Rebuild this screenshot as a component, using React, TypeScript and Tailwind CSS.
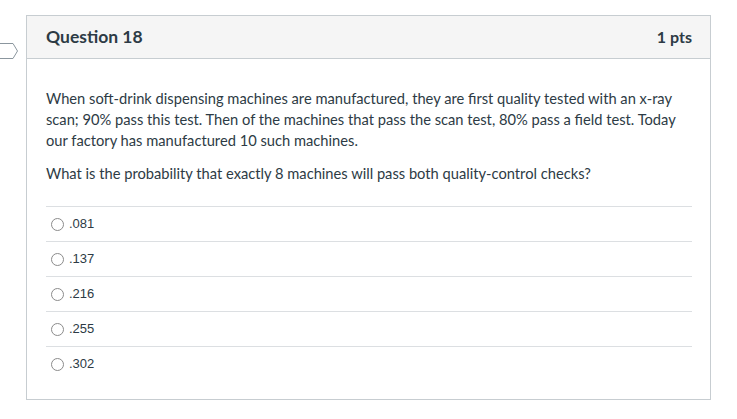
import React from "react";

const answers = [".081", ".137", ".216", ".255", ".302"];

export default function App() {
  return (
    <div className="relative h-[419px] w-[737px] bg-white font-['Lato',sans-serif] text-[#2d3b45]">
      <svg className="absolute left-0 top-[28px]" width="19" height="16" viewBox="0 0 19 16">
        <path d="M-1 0.5 H13 L17.5 8 L13 15.5 H-1" fill="#fff" stroke="#8b969e" strokeWidth="1" />
      </svg>
      <div className="ml-[26px] mt-[15px] h-[385px] w-[685px] border border-[#c7cdd1]">
        <div className="flex h-[43px] items-center justify-between border-b border-[#c7cdd1] bg-[#f5f5f5] pl-[19px] pr-[18px]">
          <span className="text-[17.5px] font-bold text-[#2d3b45]">Question 18</span>
          <span className="text-[16px] font-bold text-[#2d3b45]">1 pts</span>
        </div>
        <div className="pl-[19px] pr-[18px] pt-[29px]">
          <p className="text-[14.7px] leading-[21px]">
            When soft-drink dispensing machines are manufactured, they are first quality tested with an x-ray scan; 90% pass this test. Then of the machines that pass the scan test, 80% pass a field test. Today our factory has manufactured 10 such machines.
          </p>
          <p className="mt-[12px] text-[14.7px] leading-[21px]">
            What is the probability that exactly 8 machines will pass both quality-control checks?
          </p>
          <div className="mt-[22px]">
            {answers.map((a) => (
              <div key={a} className="flex h-[35px] items-center border-t border-[#dcdfe2] pl-[5px]">
                <span className="h-[13px] w-[13px] rounded-full border border-[#8b8b8b] bg-white" />
                <span className="ml-[5px] font-['Liberation_Sans',sans-serif] text-[13px] text-[#2d3b45]">{a}</span>
              </div>
            ))}
          </div>
        </div>
      </div>
    </div>
  );
}
